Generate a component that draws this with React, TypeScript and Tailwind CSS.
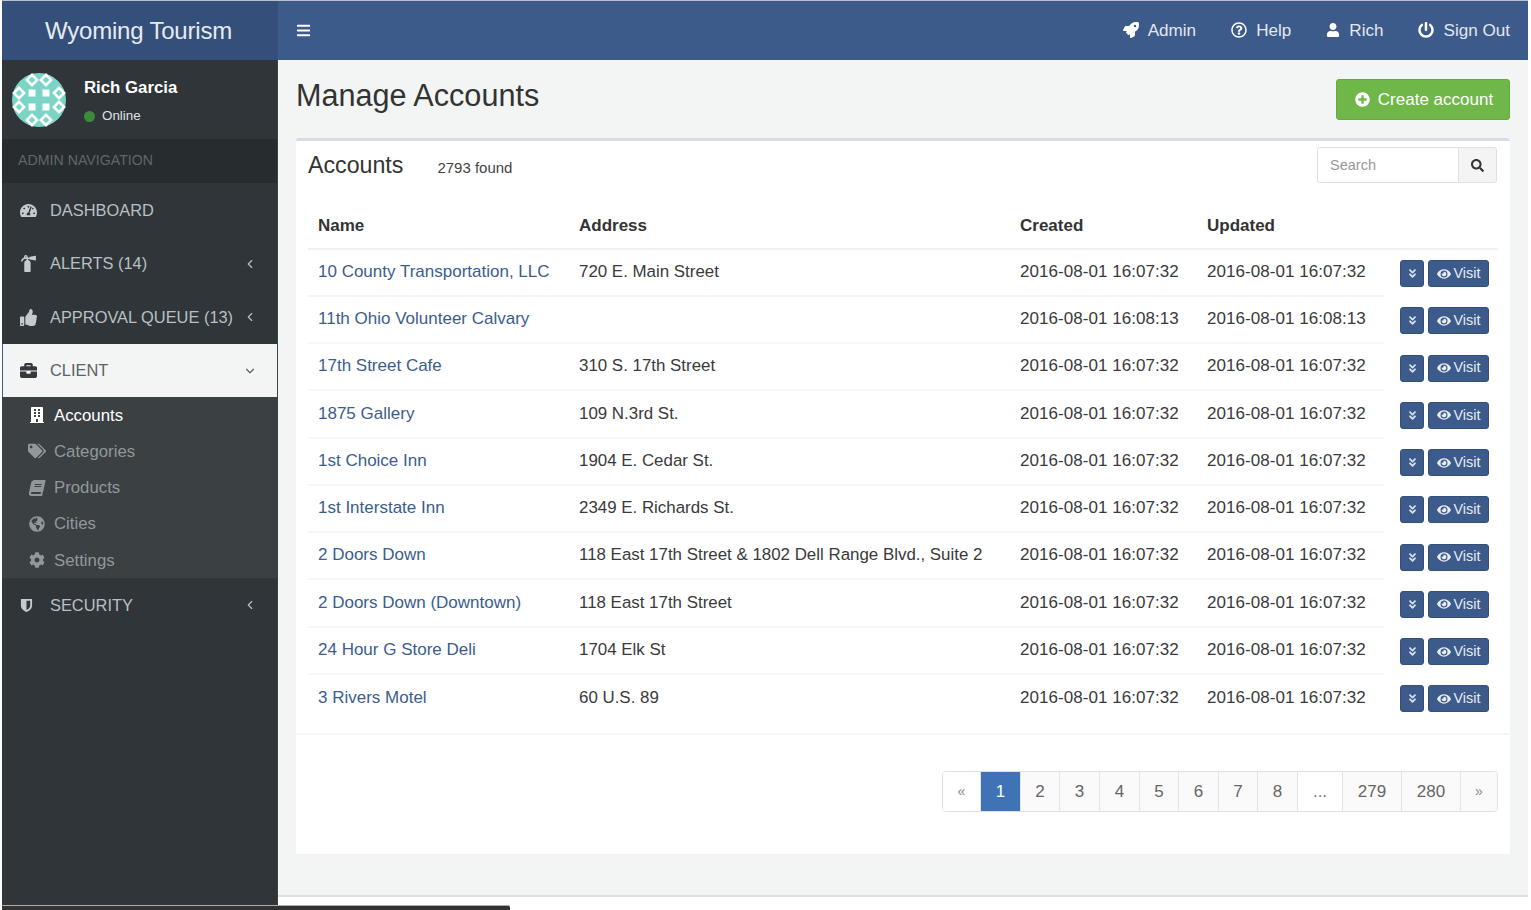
import type { ReactNode } from 'react'
import { ChevronDown, ChevronLeft } from 'lucide-react'
import {
  FaAngleDoubleDown,
  FaBars,
  FaBook,
  FaBriefcase,
  FaBuilding,
  FaCog,
  FaEye,
  FaFireExtinguisher,
  FaGlobeAmericas,
  FaPlusCircle,
  FaPowerOff,
  FaRegQuestionCircle,
  FaRocket,
  FaSearch,
  FaTachometerAlt,
  FaTags,
  FaThumbsUp,
  FaUser,
} from 'react-icons/fa'

const accounts = [
  { name: '10 County Transportation, LLC', address: '720 E. Main Street', created: '2016-08-01 16:07:32' },
  { name: '11th Ohio Volunteer Calvary', address: '', created: '2016-08-01 16:08:13' },
  { name: '17th Street Cafe', address: '310 S. 17th Street', created: '2016-08-01 16:07:32' },
  { name: '1875 Gallery', address: '109 N.3rd St.', created: '2016-08-01 16:07:32' },
  { name: '1st Choice Inn', address: '1904 E. Cedar St.', created: '2016-08-01 16:07:32' },
  { name: '1st Interstate Inn', address: '2349 E. Richards St.', created: '2016-08-01 16:07:32' },
  { name: '2 Doors Down', address: '118 East 17th Street & 1802 Dell Range Blvd., Suite 2', created: '2016-08-01 16:07:32' },
  { name: '2 Doors Down (Downtown)', address: '118 East 17th Street', created: '2016-08-01 16:07:32' },
  { name: '24 Hour G Store Deli', address: '1704 Elk St', created: '2016-08-01 16:07:32' },
  { name: '3 Rivers Motel', address: '60 U.S. 89', created: '2016-08-01 16:07:32' },
]

const pages = [
  { label: '«', width: 'w-[37px]', tone: 'bg-white text-[#8a8a8a] text-[14px]' },
  { label: '1', width: 'w-[40px]', tone: 'bg-[#3f73b5] text-white' },
  { label: '2', width: 'w-[39px]', tone: 'bg-[#fafafa] text-[#666]' },
  { label: '3', width: 'w-[40px]', tone: 'bg-[#fafafa] text-[#666]' },
  { label: '4', width: 'w-[40px]', tone: 'bg-[#fafafa] text-[#666]' },
  { label: '5', width: 'w-[39px]', tone: 'bg-[#fafafa] text-[#666]' },
  { label: '6', width: 'w-[40px]', tone: 'bg-[#fafafa] text-[#666]' },
  { label: '7', width: 'w-[39px]', tone: 'bg-[#fafafa] text-[#666]' },
  { label: '8', width: 'w-[40px]', tone: 'bg-[#fafafa] text-[#666]' },
  { label: '...', width: 'w-[45px]', tone: 'bg-white text-[#777]' },
  { label: '279', width: 'w-[59px]', tone: 'bg-[#fafafa] text-[#666]' },
  { label: '280', width: 'w-[59px]', tone: 'bg-[#fafafa] text-[#666]' },
  { label: '»', width: 'w-[37px]', tone: 'bg-[#fafafa] text-[#8a8a8a] text-[14px]' },
]

function Avatar() {
  const squares = [-7, 7]
  const diamonds = [
    [-7, -20], [7, -20], [-20, -7], [20, -7], [-20, 7], [20, 7], [-7, 20], [7, 20],
  ]
  return (
    <svg viewBox="-27 -27 54 54" className="w-[54px] h-[54px] shrink-0">
      <circle cx="0" cy="0" r="27" fill="#7bd5c6" />
      {squares.map((x) =>
        squares.map((y) => <rect key={`${x}-${y}`} x={x - 3.5} y={y - 3.5} width="7" height="7" fill="#fff" />),
      )}
      {diamonds.map(([x, y]) => (
        <rect
          key={`${x}-${y}`}
          x={x - 3.6}
          y={y - 3.6}
          width="7.2"
          height="7.2"
          fill="none"
          stroke="#fff"
          strokeWidth="2.6"
          transform={`rotate(45 ${x} ${y})`}
        />
      ))}
    </svg>
  )
}

// half shaded shield, the solid one in the icon package is not split
function ShieldIcon() {
  return (
    <svg viewBox="0 0 14 16" className="w-[13px] h-[15px]">
      <path d="M1 1h12v7c0 3.5-3 5.8-6 7-3-1.200-6-3.500-6-7z" fill="#c4cacd" />
      <path d="M7 3h4v5c0 2.300-2 3.900-4 4.800z" fill="#2f3538" />
    </svg>
  )
}

function NavItem({ icon, label, arrow, height }: { icon: ReactNode; label: string; arrow?: boolean; height: string }) {
  return (
    <div className={`flex items-center pl-[18px] pr-[20px] text-[#b8c0c4] text-[16.4px] ${height}`}>
      <span className="w-[30px] flex text-[#c4cacd] text-[17px]">{icon}</span>
      <span className="flex-1 whitespace-nowrap">{label}</span>
      {arrow && <ChevronLeft size={14} strokeWidth={2} />}
    </div>
  )
}

function SubItem({ icon, label, active }: { icon: ReactNode; label: string; active?: boolean }) {
  return (
    <div className={`flex items-center h-[36.25px] pl-[24px] text-[16.8px] ${active ? 'text-white' : 'text-[#91989c]'}`}>
      <span className="w-[28px] flex justify-center pr-[6px] text-[16px]">{icon}</span>
      <span>{label}</span>
    </div>
  )
}

function Sidebar() {
  return (
    <aside className="w-[276px] shrink-0 h-full bg-[#2f3538] flex flex-col border-r border-[#3c4245]">
      <div className="h-[79px] flex items-center pl-[10px]">
        <Avatar />
        <div className="ml-[18px] pt-[2px]">
          <div className="text-white font-bold text-[16.8px] leading-[22px]">Rich Garcia</div>
          <div className="flex items-center mt-[9px] text-[#dfe3e5] text-[13.4px] leading-[16px]">
            <span className="w-[11px] h-[11px] rounded-full bg-[#3e8a3a] mr-[7px]" />
            Online
          </div>
        </div>
      </div>
      <div className="h-[44px] bg-[#272c2e] flex items-center pl-[16px] text-[14.2px] text-[#5f676b]">ADMIN NAVIGATION</div>
      <NavItem icon={<FaTachometerAlt />} label="DASHBOARD" height="h-[54px]" />
      <NavItem icon={<FaFireExtinguisher />} label="ALERTS (14)" arrow height="h-[53px]" />
      <NavItem icon={<FaThumbsUp />} label="APPROVAL QUEUE (13)" arrow height="h-[54px]" />
      <div className="h-[53px] bg-[#f3f5f4] border-l border-[#3c5a8a] flex items-center pl-[17px] pr-[20px] text-[#5a6367] text-[16.4px]">
        <span className="w-[30px] flex text-[#33393c] text-[17px]">
          <FaBriefcase />
        </span>
        <span className="flex-1">CLIENT</span>
        <ChevronDown size={14} strokeWidth={2} />
      </div>
      <div className="h-[181px] bg-[#3b4043]">
        <SubItem icon={<FaBuilding />} label="Accounts" active />
        <SubItem icon={<FaTags className="text-[18px]" />} label="Categories" />
        <SubItem icon={<FaBook className="-skew-x-12" />} label="Products" />
        <SubItem icon={<FaGlobeAmericas />} label="Cities" />
        <SubItem icon={<FaCog />} label="Settings" />
      </div>
      <NavItem icon={<ShieldIcon />} label="SECURITY" arrow height="h-[54px]" />
    </aside>
  )
}

function TopLink({ icon, label }: { icon: ReactNode; label: string }) {
  return (
    <div className="flex items-center gap-[9px] text-[17.1px] text-[#e3e8f0]">
      <span className="text-[16px] text-white">{icon}</span>
      {label}
    </div>
  )
}

function AccountsTable() {
  return (
    <table className="w-[1190px] ml-[12px] border-separate border-spacing-0 text-[17px] table-fixed">
      <thead>
        <tr className="h-[45.5px] text-left text-[#333]">
          <th className="w-[271px] pl-[10px] font-bold border-b-2 border-[#f1f1f1]">Name</th>
          <th className="w-[441px] font-bold border-b-2 border-[#f1f1f1]">Address</th>
          <th className="w-[187px] font-bold border-b-2 border-[#f1f1f1]">Created</th>
          <th className="w-[177px] font-bold border-b-2 border-[#f1f1f1]">Updated</th>
          <th className="border-b-2 border-[#f1f1f1]" />
        </tr>
      </thead>
      <tbody>
        {accounts.map((a, i) => {
          const line = i < accounts.length - 1 ? 'border-b-2 border-[#f6f6f6]' : ''
          return (
            <tr key={a.name} className="h-[47.25px] text-[#3a3a3a]">
              <td className={`pl-[10px] pb-[1px] text-[#3c5d8c] whitespace-nowrap ${line}`}>{a.name}</td>
              <td className={`pb-[1px] whitespace-nowrap text-[16.9px] ${line}`}>{a.address}</td>
              <td className={`pb-[1px] whitespace-nowrap tracking-[0.05px] ${line}`}>{a.created}</td>
              <td className={`pb-[1px] whitespace-nowrap tracking-[0.05px] ${line}`}>{a.created}</td>
              <td className="pl-[16px]">
                <div className="flex gap-[4px] mt-[1px]">
                  <button className="w-[24px] h-[27px] bg-[#3c5a8a] border border-[#33507c] rounded-[3px] flex items-center justify-center text-[#dbe3ee] text-[11px]">
                    <FaAngleDoubleDown />
                  </button>
                  <button className="w-[61px] h-[27px] bg-[#3c5a8a] border border-[#33507c] rounded-[3px] flex items-center justify-center gap-[3px] text-[#e8edf4] text-[14.4px]">
                    <FaEye className="text-[14px]" />
                    Visit
                  </button>
                </div>
              </td>
            </tr>
          )
        })}
      </tbody>
    </table>
  )
}

export default function App() {
  return (
    <div className="w-[1531px] h-[910px] overflow-hidden bg-white font-['Liberation_Sans',Arial,sans-serif] flex flex-col">
      <div className="h-[905px] flex pl-[2px] pr-[3px]">
        <div className="w-[276px] shrink-0 flex flex-col">
          <div className="h-[60px] shrink-0 bg-[#344f79] border-t border-[#b9c0cc] flex items-center justify-center pr-[3px] text-[#e6ebf2] text-[24px] font-light tracking-[-0.2px]">
            Wyoming Tourism
          </div>
          <div className="h-[845px]">
            <Sidebar />
          </div>
        </div>
        <div className="flex-1 min-w-0 flex flex-col">
          <header className="h-[60px] shrink-0 bg-[#3c5a8a] border-t border-[#b9c0cc] flex items-center pl-[18px] pr-[18px] text-white">
            <FaBars className="text-[15px]" />
            <div className="ml-auto flex items-center gap-[35px]">
              <TopLink icon={<FaRocket />} label="Admin" />
              <TopLink icon={<FaRegQuestionCircle />} label="Help" />
              <TopLink icon={<FaUser className="text-[14px]" />} label="Rich" />
              <TopLink icon={<FaPowerOff />} label="Sign Out" />
            </div>
          </header>
          <main className="h-[837px] shrink-0 bg-[#f3f5f4] border-b-2 border-[#dcdfe6] pl-[18px] pr-[18px]">
            <div className="h-[78px] flex items-start justify-between">
              <h1 className="mt-[16px] text-[30.6px] leading-[38px] text-[#333]">Manage Accounts</h1>
              <button className="mt-[19px] w-[174px] h-[41px] bg-[#6fb749] border border-[#65ab41] rounded-[3px] flex items-center justify-center gap-[8px] pl-[2px] text-white text-[17px]">
                <FaPlusCircle className="text-[15px]" />
                Create account
              </button>
            </div>
            <section className="h-[716px] bg-white border-t-[3px] border-[#d6dbe6] rounded-t-[3px]">
              <div className="h-[63px] flex items-start pl-[12px] pr-[13px]">
                <h2 className="mt-[9px] text-[23.2px] leading-[30px] text-[#333]">Accounts</h2>
                <span className="ml-[34px] mt-[18px] text-[15px] leading-[18px] text-[#444]">2793 found</span>
                <div className="ml-auto mt-[6px] flex h-[36px]">
                  <div className="w-[142px] border border-[#dde0e6] rounded-l-[3px] flex items-center pl-[12px] pt-[1px] text-[14.5px] text-[#999]">
                    Search
                  </div>
                  <div className="w-[39px] -ml-px border border-[#dde0e6] rounded-r-[3px] bg-[#f4f4f4] flex items-center justify-center text-[#333] text-[13px]">
                    <FaSearch />
                  </div>
                </div>
              </div>
              <AccountsTable />
              <div className="mt-[11px] border-t-2 border-[#f6f6f6] pt-[36px] pr-[12px] flex justify-end">
                <div className="flex h-[41px] border border-[#e0e0e0] rounded-[4px] overflow-hidden text-[17px]">
                  {pages.map((p, i) => (
                    <span
                      key={p.label}
                      className={`${p.width} ${p.tone} flex items-center justify-center ${i > 0 ? 'border-l border-[#e4e4e4]' : ''}`}
                    >
                      {p.label}
                    </span>
                  ))}
                </div>
              </div>
            </section>
          </main>
        </div>
      </div>
      <div className="h-[5px] ml-[2px] w-[508px] bg-[#333] border-t border-[#a9acae] rounded-tr-[2px]" />
    </div>
  )
}
